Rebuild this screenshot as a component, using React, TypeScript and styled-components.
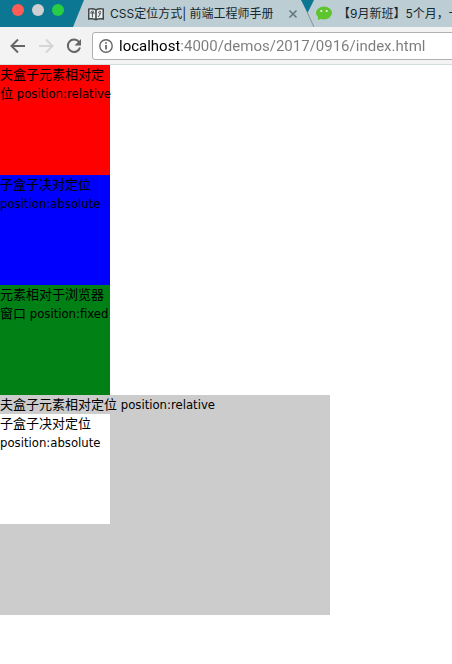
import React from "react";
import styled, { createGlobalStyle } from "styled-components";

const GlobalStyle = createGlobalStyle`
  * { box-sizing: border-box; }
  body {
    margin: 0;
    background: #fff;
    color: #000;
    overflow-x: hidden;
    font-family: "DejaVu Sans Condensed", "Noto Sans CJK SC", sans-serif;
  }
`;

const TabStrip = styled.header`
  display: flex;
  height: 27px;
  overflow: hidden;
  background: #0b7793;
`;

const WindowButtons = styled.div`
  display: flex;
  flex: none;
  gap: 8px;
  width: 73px;
  padding: 4px 0 0 12px;
`;

const WindowButton = styled.button<{ $color: string }>`
  width: 12px;
  height: 12px;
  padding: 0;
  border: 0;
  border-radius: 50%;
  background: ${(p) => p.$color};
`;

const Edge = styled.svg`
  display: block;
  flex: none;
`;

const Tab = styled.div<{ $grow?: boolean }>`
  display: flex;
  flex: ${(p) => (p.$grow ? "1 0 auto" : "none")};
  align-items: center;
  gap: 6px;
  width: ${(p) => (p.$grow ? "auto" : "217px")};
  padding-left: ${(p) => (p.$grow ? "2px" : "4px")};
  background: #bccdd3;
`;

const TabTitle = styled.span`
  flex: 1;
  color: #14282e;
  font: 12px/26px Inter, "Noto Sans CJK SC", sans-serif;
  white-space: nowrap;
`;

const CloseButton = styled.button`
  display: flex;
  padding: 0;
  margin-right: 3px;
  border: 0;
  background: none;
`;

const Toolbar = styled.nav`
  display: flex;
  align-items: center;
  height: 38px;
  padding-left: 10px;
  overflow: hidden;
  border-bottom: 1px solid #d5dddd;
  background: #f3f3f3;
`;

const NavButton = styled.button`
  display: flex;
  flex: none;
  width: 28px;
  padding: 0;
  border: 0;
  background: none;
`;

const AddressBar = styled.label`
  display: flex;
  flex: 1;
  align-items: center;
  gap: 6px;
  height: 28px;
  margin: 0 -6px 0 -2px;
  padding-left: 6px;
  border: 1px solid #b0b0b0;
  border-radius: 3px;
  background: #fff;
`;

const AddressInput = styled.input`
  flex: 1;
  min-width: 0;
  padding: 0;
  border: 0;
  outline: 0;
  font: 15px/26px Roboto, sans-serif;
  color: transparent;
  background: linear-gradient(90deg, #000 60px, #7c7c7c 60px);
  -webkit-background-clip: text;
  background-clip: text;
`;

const Page = styled.main`
  font-size: 13px;
  line-height: 19px;
`;

const Box = styled.div<{ $color: string }>`
  width: 110px;
  height: 110px;
  white-space: nowrap;
  background: ${(p) => p.$color};
`;

const Container = styled.section`
  width: 330px;
  height: 220px;
  background: #ccc;
`;

export default function App() {
  return (
    <>
      <GlobalStyle />
      <TabStrip>
        <WindowButtons>
          <WindowButton $color="#ff5d55" aria-label="Close window" />
          <WindowButton $color="#d0d0d2" aria-label="Minimize window" />
          <WindowButton $color="#27cd45" aria-label="Zoom window" />
        </WindowButtons>
        <Edge width="11" height="27" aria-hidden="true">
          <path d="M0 27 11 0V27Z" fill="#bccdd3" />
        </Edge>
        <Tab>
          <svg width="16" height="14" viewBox="0 0 16 14" aria-hidden="true">
            <path d="M0 1.500C3 .6 6 .8 8 2c2-1.200 5-1.400 8-.5V13c-3-.8-6-.6-8 .6C6 12.400 3 12.200 0 13Z" fill="#434748" />
            <path d="M1.500 2.700c2-.4 4-.2 5.700.6v8.200c-1.700-.6-3.700-.7-5.700-.4ZM14.500 2.700c-2-.4-4-.2-5.700.6v8.200c1.700-.6 3.700-.7 5.700-.4Z" fill="#e9eff1" />
            <path d="M3 6.800V5C3.400 3.700 5.500 3.700 5.800 5v1.800M4.400 5v5.500M12.800 4.500c-1.300-.7-2.500.2-2 1.500.5 1.200 2 .6 2-.5M12.500 6.500 10.300 10" fill="none" stroke="#434748" strokeWidth="1" />
          </svg>
          <TabTitle>CSS定位方式| 前端工程师手册</TabTitle>
          <CloseButton aria-label="Close tab">
            <svg width="10" height="10" viewBox="0 0 10 10">
              <path d="m1.500 1.500 7 7m0-7-7 7" stroke="#61777d" strokeWidth="1.600" />
            </svg>
          </CloseButton>
        </Tab>
        <Edge width="13" height="27" aria-hidden="true">
          <path d="M0 0h13v27H0Z" fill="#bccdd3" />
          <path d="M0 0H13L6.500 13Z" fill="#0b7793" />
          <path d="m6.500 13 6.500 14" stroke="#83959b" />
        </Edge>
        <Tab $grow>
          <svg width="16" height="15" viewBox="0 0 16 15" aria-hidden="true">
            <ellipse cx="8" cy="7" rx="8" ry="6.500" fill="#5fc52e" />
            <path d="m2 10 0 4 4-1.500Z" fill="#5fc52e" />
            <circle cx="5.300" cy="5" r="1.100" fill="#e6f4df" />
            <circle cx="10.700" cy="5" r="1.100" fill="#e6f4df" />
          </svg>
          <TabTitle>【9月新班】5个月，一</TabTitle>
        </Tab>
      </TabStrip>
      <Toolbar>
        <NavButton aria-label="Back">
          <svg width="16" height="16" viewBox="0 0 16 16" fill="none" stroke="#666" strokeWidth="2">
            <path d="M15 8H2M8 1.500 1.500 8 8 14.500" />
          </svg>
        </NavButton>
        <NavButton aria-label="Forward" disabled>
          <svg width="16" height="16" viewBox="0 0 16 16" fill="none" stroke="#d5d5d5" strokeWidth="2">
            <path d="M1 8h13M8 1.500 14.500 8 8 14.500" />
          </svg>
        </NavButton>
        <NavButton aria-label="Reload">
          <svg width="16" height="16" viewBox="0 0 16 16" fill="none" stroke="#666" strokeWidth="2">
            <path d="M13 4A6.200 6.200 0 1 0 14 9.500" />
            <path d="M15 1v6.500H8.500Z" fill="#666" stroke="none" />
          </svg>
        </NavButton>
        <AddressBar>
          <svg width="14" height="14" viewBox="0 0 14 14" aria-hidden="true">
            <circle cx="7" cy="7" r="6.200" fill="none" stroke="#666" strokeWidth="1.400" />
            <path d="M7 6v4.500M7 3.200v1.600" stroke="#555" strokeWidth="1.600" />
          </svg>
          <AddressInput
            aria-label="Address"
            spellCheck={false}
            defaultValue="localhost:4000/demos/2017/0916/index.html"
          />
        </AddressBar>
      </Toolbar>
      <Page>
        <Box $color="#ff0000">
          夫盒子元素相对定
          <br />位 position:relative
        </Box>
        <Box $color="#0000ff">
          子盒子决对定位
          <br />position:absolute
        </Box>
        <Box $color="#008015">
          元素相对于浏览器
          <br />窗口 position:fixed
        </Box>
        <Container>
          夫盒子元素相对定位 position:relative
          <Box $color="#ffffff">
            子盒子决对定位
            <br />position:absolute
          </Box>
        </Container>
      </Page>
    </>
  );
}
